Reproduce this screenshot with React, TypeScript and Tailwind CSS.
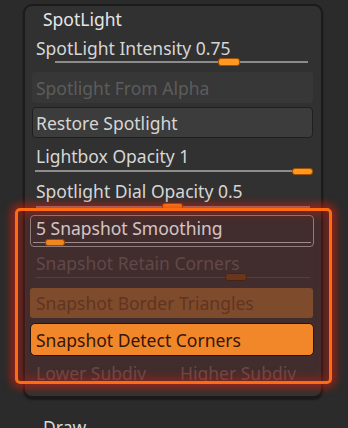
export default function App() {
  return (
    <div className="relative w-[348px] h-[428px] overflow-hidden bg-[#2b2b2b] font-['Noto_Sans',sans-serif] text-[17.5px] leading-[20px]">
      <div className="ml-[23px] mt-[4px] w-[300px] h-[394px] rounded-[9px] border-2 border-[#1b1b1b] bg-[#313131] flex flex-col shadow-[0_2px_2px_rgba(0,0,0,0.4)]">
        <div className="h-[28px] pt-[3px] pl-[18px] text-[#e6e6e6]">SpotLight</div>

        <div className="relative h-[36px] pt-[4px] pl-[11px] text-[#d6d6d6]">
          SpotLight Intensity 0.75
          <div className="absolute top-[27px] left-[30px] w-[253px] h-[2px] bg-[#8c8c8c]" />
          <div className="absolute top-[24px] left-[193px] w-[22px] h-[8px] rounded-[3px] bg-[#ff9820] border border-[#a04e00]" />
        </div>

        <div className="mt-[2px] ml-[7px] w-[281px] h-[31px] bg-[#373737] rounded-[3px] flex items-center pl-[4px] text-[#5c5c5c]">
          Spotlight From Alpha
        </div>

        <div className="mt-[4px] ml-[7px] w-[281px] h-[31px] bg-[#3c3c3c] border border-[#1f1f1f] rounded-[4px] flex items-center pl-[3px] text-[#d6d6d6]">
          Restore Spotlight
        </div>

        <div className="relative h-[38px] pt-[8px] pl-[11px] text-[#d6d6d6]">
          Lightbox Opacity 1
          <div className="absolute top-[32px] left-[10px] w-[262px] h-[2px] bg-[#8c8c8c]" />
          <div className="absolute top-[30px] left-[267px] w-[21px] h-[7px] rounded-[3px] bg-[#ff9820] border border-[#a04e00]" />
        </div>

        <div className="relative h-[38px] pt-[5px] pl-[11px] text-[#d6d6d6]">
          Spotlight Dial Opacity 0.5
          <div className="absolute top-[30px] left-[11px] w-[274px] h-[2px] bg-[#8c8c8c]" />
          <div className="absolute top-[27px] left-[137px] w-[21px] h-[7px] rounded-[3px] bg-[#ff9820] border border-[#a04e00]" />
        </div>

        <div className="relative mt-[1px] ml-[5px] w-[284px] h-[32px] border border-[#8e8e8e] rounded-[4px] pt-[2px] pl-[5px] text-[#e0e0e0]">
          5 Snapshot Smoothing
          <div className="absolute top-[26px] left-[2px] right-[2px] h-[1px] bg-[#a0a0a0]" />
          <div className="absolute top-[23px] left-[14px] w-[20px] h-[7px] rounded-[3px] bg-[#ff9820] border border-[#a04e00]" />
        </div>

        <div className="relative h-[38px] pt-[6px] pl-[11px] text-[#575050]">
          Snapshot Retain Corners
          <div className="absolute top-[30px] left-[11px] w-[274px] h-[1px] bg-[#4a4444]" />
          <div className="absolute top-[26px] left-[200px] w-[22px] h-[8px] rounded-[3px] bg-[#5c3d1f] border border-[#3a2410]" />
        </div>

        <div className="mt-[3px] ml-[5px] w-[283px] h-[30px] bg-[#7a5431] rounded-[3px] flex items-center pl-[6px] text-[#553a22]">
          Snapshot Border Triangles
        </div>

        <div className="mt-[5px] ml-[5px] w-[284px] h-[33px] bg-[#ff9a2c] border-[1.5px] border-[#121212] rounded-[5px] flex items-center pl-[5px] text-[#24160a]">
          Snapshot Detect Corners
        </div>

        <div className="flex h-[29px] pt-[7px] pl-[11px] text-[#665050]">
          <div className="w-[144px]">Lower Subdiv</div>
          <div>Higher Subdiv</div>
        </div>
      </div>

      <div className="mt-[19px] ml-[43px] text-[#d8d8d8]">Draw</div>

      <div className="pointer-events-none absolute left-[15px] top-[208px] w-[317px] h-[176px] border-[3px] border-[#ff6b12] rounded-[5px] bg-[rgba(160,30,30,0.15)] shadow-[0_0_9px_4px_rgba(220,30,10,0.6),inset_0_0_9px_4px_rgba(220,30,10,0.35)]" />
    </div>
  );
}
